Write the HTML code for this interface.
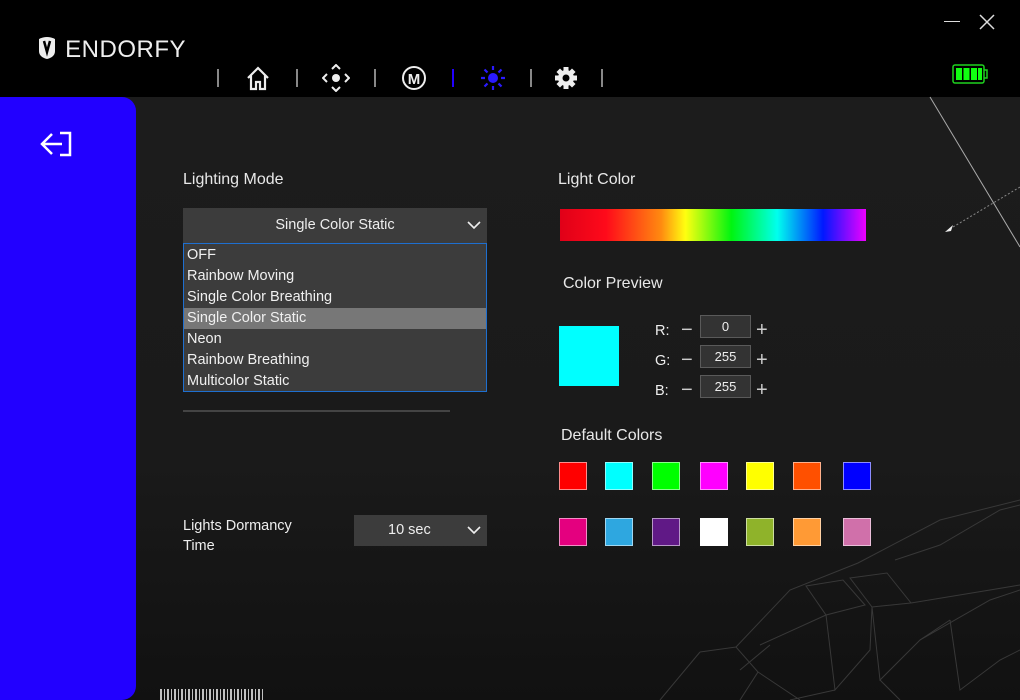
<!DOCTYPE html>
<html><head><meta charset="utf-8"><style>
*{margin:0;padding:0;box-sizing:border-box}
body{width:1020px;height:700px;background:#000;font-family:"Liberation Sans",sans-serif;color:#eee;position:relative;overflow:hidden}
.abs{position:absolute}
.main{left:0;top:97px;width:1020px;height:603px;background:linear-gradient(180deg,#1c1c1c 0%,#1a1a1a 60%,#111 100%)}
.side{left:0;top:97px;width:136px;height:603px;background:#2200ff;border-radius:0 14px 14px 0}
.lbl{font-size:16px;color:#e8e8e8}
.dd{background:#3c3c3c}
.item{height:21px;line-height:21px;padding-left:3px;font-size:14.5px;color:#f0f0f0}
.sw{width:28px;height:28px;border:1px solid rgba(255,255,255,.55)}
.num{width:51px;height:23px;background:#333;border:1px solid #5a5a5a;font-size:13px;text-align:center;line-height:21px}
.pm{font-size:20px;color:#ccc;line-height:20px}
.sep{width:2px;height:18px;background:#888;top:69px}
</style></head><body>
<div class="abs" style="left:36px;top:36px;font-size:24px;color:#eee;letter-spacing:0.5px">
<svg width="22" height="24" viewBox="0 0 22 24" style="vertical-align:-3px"><path d="M3 3 Q11 -1 19 3 L19 15 Q19 21 11 23 Q3 21 3 15Z" fill="#eee"/><path d="M8 5 L11 16 L14 5" stroke="#000" stroke-width="2.5" fill="none"/></svg> ENDORFY</div>
<div class="abs" style="left:944px;top:21px;width:16px;height:1px;background:#ddd"></div>
<svg class="abs" style="left:978px;top:13px" width="18" height="18"><path d="M2 2L16 16M16 2L2 16" stroke="#ddd" stroke-width="1.5"/></svg>
<svg class="abs" style="left:951px;top:63px" width="40" height="22"><rect x="2" y="2" width="31" height="18" rx="2" fill="none" stroke="#1fd21f" stroke-width="1.5"/><path d="M33 7h3v8h-3" fill="none" stroke="#1fd21f" stroke-width="1.5"/><rect x="5" y="5" width="6" height="12" fill="#1f1"/><rect x="12.5" y="5" width="6" height="12" fill="#1f1"/><rect x="20" y="5" width="6" height="12" fill="#1f1"/><rect x="27" y="5" width="4" height="12" fill="#1f1"/></svg>
<div class="abs sep" style="left:217px"></div><div class="abs sep" style="left:296px"></div><div class="abs sep" style="left:374px"></div><div class="abs sep" style="left:452px;background:#2200ff"></div><div class="abs sep" style="left:530px"></div><div class="abs sep" style="left:601px"></div>
<svg class="abs" style="left:245px;top:65px" width="26" height="26"><path d="M3 13L13 3L23 13M6 10V24H11V17H15V24H20V10" fill="none" stroke="#eee" stroke-width="2.2"/></svg>
<svg class="abs" style="left:322px;top:64px" width="28" height="28"><circle cx="14" cy="14" r="4" fill="#eee"/><path d="M10 5L14 1L18 5M10 23L14 27L18 23M5 10L1 14L5 18M23 10L27 14L23 18" fill="none" stroke="#eee" stroke-width="2"/></svg>
<svg class="abs" style="left:401px;top:65px" width="26" height="26"><circle cx="13" cy="13" r="11" fill="none" stroke="#eee" stroke-width="2"/><text x="13" y="19" font-size="15" font-weight="bold" fill="#eee" text-anchor="middle" font-family="Liberation Sans">M</text></svg>
<svg class="abs" style="left:480px;top:65px" width="26" height="26"><circle cx="13" cy="13" r="5" fill="#2a1aff"/><path d="M13 1V5M13 21V25M1 13H5M21 13H25M4.5 4.5L7.5 7.5M18.5 18.5L21.5 21.5M4.5 21.5L7.5 18.5M18.5 7.5L21.5 4.5" stroke="#2a1aff" stroke-width="2.2"/></svg>
<svg class="abs" style="left:554px;top:66px" width="24" height="24"><g transform="translate(12 12)" fill="#eee"><circle r="8"/><g id="t"><rect x="-2.5" y="-11" width="5" height="5"/></g><use href="#t" transform="rotate(45)"/><use href="#t" transform="rotate(90)"/><use href="#t" transform="rotate(135)"/><use href="#t" transform="rotate(180)"/><use href="#t" transform="rotate(225)"/><use href="#t" transform="rotate(270)"/><use href="#t" transform="rotate(315)"/><circle r="3.5" fill="#000"/></g></svg>
<div class="abs main"></div>
<svg class="abs" style="left:0;top:0" width="1020" height="700"><g fill="none" stroke="#383838" stroke-width="1">
<path d="M700 652L736 647L758 672L740 700M736 647L790 590L858 563L940 520L1020 500"/>
<path d="M806 586L843 580L865 605L826 615ZM850 578L887 573L911 603L872 607ZM895 560L940 545L1000 510L1020 505M911 603L990 590L1020 585"/>
<path d="M826 615L835 690L870 650L872 607M872 607L880 680L920 640L950 620M950 620L960 690L1000 660L1020 650"/>
<path d="M760 645L826 615M758 672L800 700M880 680L900 700M835 690L790 700M920 640L990 600L1020 590"/>
<path d="M660 700L700 652M740 670L770 645"/>
</g><path d="M930 97L1020 247" stroke="#aaa" stroke-width="1"/><path d="M1020 187L948 230" stroke="#888" stroke-dasharray="2 2"/><path d="M945 232l8-7-2 6z" fill="#eee"/></svg>
<div class="abs side"></div>
<svg class="abs" style="left:38px;top:130px" width="36" height="32"><path d="M14 4L4 14L14 24M4 14H24M22 3H32V25H22" fill="none" stroke="#fff" stroke-width="2.5"/></svg>
<div class="abs" style="left:160px;top:689px;width:105px;height:11px;background:repeating-linear-gradient(90deg,#eee 0 2px,transparent 2px 4px,#eee 4px 5px,transparent 5px 7px);opacity:.8"></div>
<div class="abs lbl" style="left:183px;top:171px">Lighting Mode</div>
<div class="abs dd" style="left:183px;top:208px;width:304px;height:35px;font-size:14.5px;text-align:center;line-height:35px">Single Color Static</div>
<svg class="abs" style="left:467px;top:220px" width="14" height="10"><path d="M1 2L7 8L13 2" fill="none" stroke="#eee" stroke-width="1.6"/></svg>
<div class="abs dd" style="left:183px;top:243px;width:304px;height:149px;border:1px solid #1e6fd0;padding-top:1px">
<div class="item">OFF</div><div class="item">Rainbow Moving</div><div class="item">Single Color Breathing</div><div class="item" style="background:#777">Single Color Static</div><div class="item">Neon</div><div class="item">Rainbow Breathing</div><div class="item">Multicolor Static</div></div>
<div class="abs" style="left:183px;top:410px;width:267px;height:2px;background:#444"></div>
<div class="abs" style="left:183px;top:516px;font-size:14.5px;line-height:20px">Lights Dormancy<br>Time</div>
<div class="abs dd" style="left:354px;top:515px;width:133px;height:31px;font-size:14.5px;line-height:31px;padding-left:34px">10 sec</div>
<svg class="abs" style="left:467px;top:525px" width="14" height="10"><path d="M1 2L7 8L13 2" fill="none" stroke="#eee" stroke-width="1.6"/></svg>
<div class="abs lbl" style="left:558px;top:171px">Light Color</div>
<div class="abs" style="left:560px;top:209px;width:306px;height:32px;background:linear-gradient(90deg,#e00018 0%,#ff0a1a 15%,#ff8a10 33%,#ffff10 41%,#00f510 56%,#00ffee 71%,#0018ff 86%,#ee00ff 100%)"></div>
<div class="abs lbl" style="left:563px;top:275px">Color Preview</div>
<div class="abs" style="left:559px;top:326px;width:60px;height:60px;background:#0ff"></div>
<div class="abs" style="left:655px;top:316px;font-size:14.5px;line-height:30px">R:<br>G:<br>B:</div>
<div class="abs pm" style="left:681px;top:315px;line-height:30px">−<br>−<br>−</div>
<div class="abs num" style="left:700px;top:315px">0</div><div class="abs num" style="left:700px;top:345px">255</div><div class="abs num" style="left:700px;top:375px">255</div>
<div class="abs pm" style="left:756px;top:315px;line-height:30px">+<br>+<br>+</div>
<div class="abs lbl" style="left:561px;top:427px">Default Colors</div>
<div class="abs sw" style="left:559px;top:462px;background:#f00"></div><div class="abs sw" style="left:605px;top:462px;background:#0ff"></div><div class="abs sw" style="left:652px;top:462px;background:#0f0"></div><div class="abs sw" style="left:700px;top:462px;background:#f0f"></div><div class="abs sw" style="left:746px;top:462px;background:#ff0"></div><div class="abs sw" style="left:793px;top:462px;background:#ff5000"></div><div class="abs sw" style="left:843px;top:462px;background:#00f"></div>
<div class="abs sw" style="left:559px;top:518px;background:#e4007f"></div><div class="abs sw" style="left:605px;top:518px;background:#2ea7e0"></div><div class="abs sw" style="left:652px;top:518px;background:#601986"></div><div class="abs sw" style="left:700px;top:518px;background:#fff"></div><div class="abs sw" style="left:746px;top:518px;background:#8fb32a"></div><div class="abs sw" style="left:793px;top:518px;background:#ff9a35"></div><div class="abs sw" style="left:843px;top:518px;background:#d070aa"></div>
</body></html>
